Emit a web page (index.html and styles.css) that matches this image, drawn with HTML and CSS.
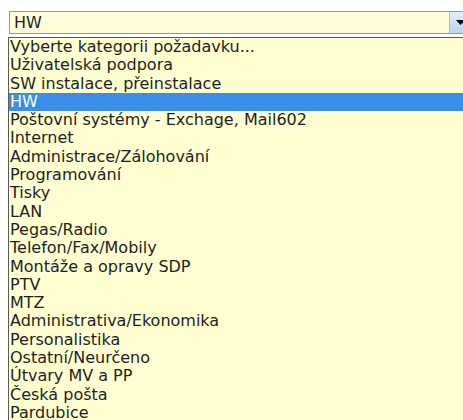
FILE: index.html
```html
<!DOCTYPE html>
<html lang="cs">
<head>
<meta charset="utf-8">
<title>Kategorie požadavku</title>
<link rel="stylesheet" href="styles.css">
</head>
<body>
<div class="picker">
  <div class="field">
    <span class="value">HW</span>
    <span class="toggle">
      <svg width="9" height="5" viewBox="0 0 9 5"><path d="M0 0h9L4.5 5z" fill="#000"/></svg>
    </span>
  </div>
  <ul class="options">
    <li>Vyberte kategorii požadavku...</li>
    <li>Uživatelská podpora</li>
    <li>SW instalace, přeinstalace</li>
    <li class="selected">HW</li>
    <li>Poštovní systémy - Exchage, Mail602</li>
    <li>Internet</li>
    <li>Administrace/Zálohování</li>
    <li>Programování</li>
    <li>Tisky</li>
    <li>LAN</li>
    <li>Pegas/Radio</li>
    <li>Telefon/Fax/Mobily</li>
    <li>Montáže a opravy SDP</li>
    <li>PTV</li>
    <li>MTZ</li>
    <li>Administrativa/Ekonomika</li>
    <li>Personalistika</li>
    <li>Ostatní/Neurčeno</li>
    <li>Útvary MV a PP</li>
    <li>Česká pošta</li>
    <li>Pardubice</li>
  </ul>
</div>
</body>
</html>
```

FILE: styles.css
```css
html, body {
  margin: 0;
  padding: 0;
  background: #fff;
  overflow: hidden;
  height: 420px;
}

.picker {
  padding: 11px 0 0 8px;
  width: 470px;
  font-family: "DejaVu Sans", Verdana, sans-serif;
  font-size: 16px;
  color: #1e1e1e;
}

/* closed combo: value + drop button */
.field {
  display: flex;
  align-items: stretch;
  box-sizing: border-box;
  width: 459px;
  height: 23px;
  border: 1px solid #7f9db9;
  background: #fffdd9;
  margin-left: 1px;
}

.value {
  flex: 1;
  padding-left: 4px;
  line-height: 21px;
}

.toggle {
  width: 18px;
  display: flex;
  align-items: center;
  padding-left: 6px;
  box-sizing: border-box;
  border-left: 1px solid #a9bcd3;
  background: linear-gradient(#e3eefb, #bcd2ee);
}

/* open option list */
.options {
  list-style: none;
  margin: 3px 0 0 0;
  padding: 0;
  border-left: 1px solid #5a5a55;
  border-top: 1px solid #5a5a55;
  background: #ffffd2;
  height: 400px;
}

.options li {
  height: 18.3px;
  line-height: 18.3px;
  padding-left: 1px;
  white-space: nowrap;
}

.options li.selected {
  background: #3b8ee8;
  color: #fff;
}
```
